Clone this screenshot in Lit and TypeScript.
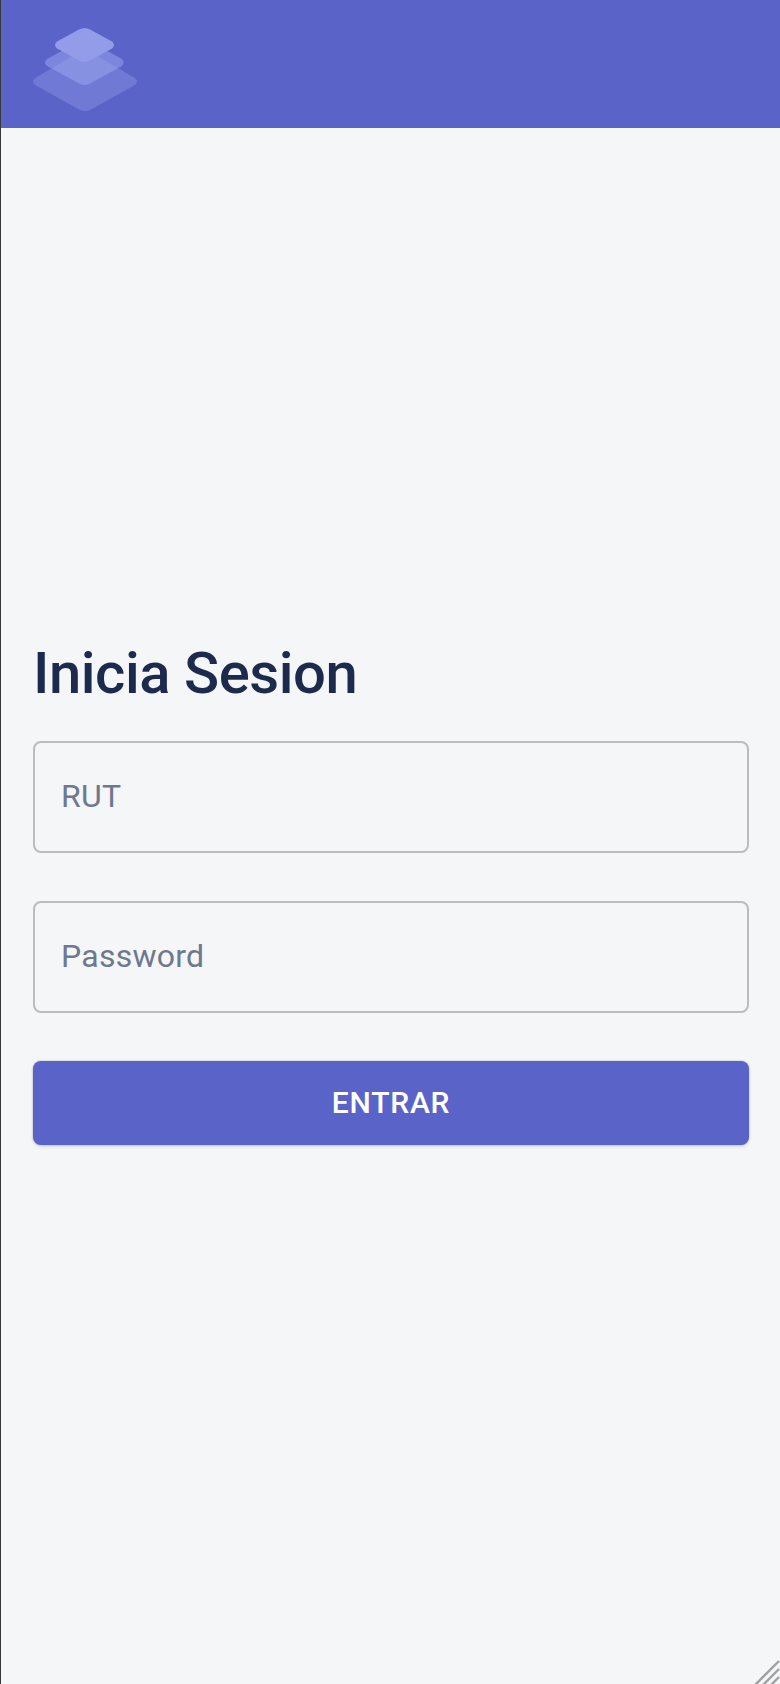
import { LitElement, html, css } from "lit";
import { customElement } from "lit/decorators.js";

@customElement("app-root")
export class AppRoot extends LitElement {
  static styles = css`
    :host { display: block; }
    .page {
      position: relative; box-sizing: border-box; width: 780px; height: 1684px;
      display: flex; flex-direction: column; overflow: hidden;
      background: #f4f6f8; border-left: 1px solid #38383c;
      font-family: Roboto, sans-serif; color: #1c2b4d;
    }
    .bar { box-sizing: border-box; height: 128px; flex: none; background: #5a64c8; padding: 28px 0 0 32px; }
    .logo { width: 104px; height: 84px; display: block; }
    form { flex: 1; display: flex; flex-direction: column; padding: 512px 31px 0 32px; }
    h2 { margin: 0 0 35px; height: 66px; font-size: 58px; line-height: 66px; font-weight: 500; letter-spacing: -0.46px; }
    .field {
      box-sizing: border-box; height: 112px; margin-bottom: 48px; padding: 0 26px 2px;
      border: 2px solid #bbbcbe; border-radius: 8px;
      display: flex; align-items: center; font-size: 32px; letter-spacing: 0.25px; color: #6e788f;
    }
    button {
      height: 84px; border: 0; border-radius: 8px; background: #5a64c8; color: #fff; padding: 0;
      font: 500 30px/52px Roboto, sans-serif; letter-spacing: 0.8px;
      box-shadow: 0 0 2px rgba(0,0,0,.31), 0 2px 4px -1px rgba(0,0,0,.15);
    }
    .grip { position: absolute; right: 0; bottom: 0; width: 30px; height: 30px; }
  `;
  render() {
    return html`
      <div class="page">
        <header class="bar">
          <svg class="logo" viewBox="33 28 104 84">
            <path fill="#a0aaf2" opacity=".31" d="M80 51.5Q85 48.5 90 51.5L134 77.5Q140 81.5 134 85.5L91 109.5Q85 112.5 79 109.5L36 85.5Q30 81.5 36 77.5Z"/>
            <path fill="#9ea8f0" opacity=".5" d="M79 41.5Q84.5 38.5 90 41.5L121 58.5Q126 62.5 121 66.5L90 83.5Q84.5 86.5 79 83.5L48 66.5Q42 62.5 48 58.5Z"/>
            <path fill="#929ce9" d="M79 29.5Q84.5 26.5 90 29.5L112 41.5Q116 45 112 48.5L90 60.5Q84.5 63.5 79 60.5L57 48.5Q53 45 57 41.5Z"/>
          </svg>
        </header>
        <form>
          <h2>Inicia Sesion</h2>
          <div class="field">RUT</div>
          <div class="field">Password</div>
          <button type="button">ENTRAR</button>
        </form>
        <svg class="grip" viewBox="0 0 30 30" fill="none" stroke="#a0a1a3" stroke-width="2.4">
          <path d="M5 31L29 7M13 31L29 15M21 31L29 23"/>
        </svg>
      </div>`;
  }
}
